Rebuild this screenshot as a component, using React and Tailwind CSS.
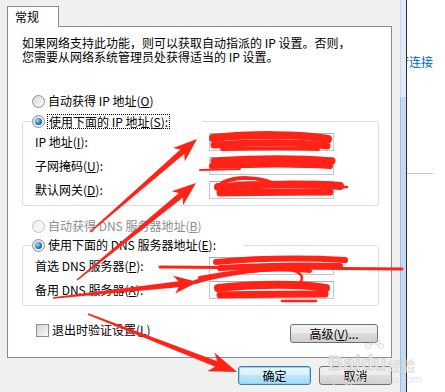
const Radio = ({ checked, disabled }) => (
  <span
    className={
      disabled
        ? "flex h-[13px] w-[13px] shrink-0 items-center justify-center rounded-full border border-[#c4c4c4] bg-linear-to-br from-[#ececec] to-[#fbfbfb]"
        : "flex h-[13px] w-[13px] shrink-0 items-center justify-center rounded-full border border-[#8e8f8f] bg-linear-to-br from-[#d8d8d8] to-[#fafafa]"
    }
  >
    {checked && (
      <span className="h-[7px] w-[7px] rounded-full bg-[radial-gradient(circle_at_35%_35%,#9be0fb,#1e7cc0_55%,#0a3a63)]" />
    )}
  </span>
);

const Field = () => (
  <div className="h-[18px] w-[125px] border border-[#c2c7cf] border-t-[#abadb3] bg-white" />
);

const Row = ({ label }) => (
  <div className="flex h-[18px] items-center">
    <span className="w-[186px] whitespace-nowrap pl-[12px]">{label}</span>
    <Field />
  </div>
);

const U = ({ children }) => <span className="underline">{children}</span>;

const btn =
  "flex h-[19px] items-center justify-center rounded-[3px] border border-[#707070] bg-[linear-gradient(#f2f2f2,#ebebeb_49%,#dddddd_50%,#cfcfcf)]";

// tapered annotation arrow: thin at the tail, wide notched head at the tip
const arrow = (x1, y1, x2, y2, len = 24, half = 9) => {
  const dx = x2 - x1;
  const dy = y2 - y1;
  const l = Math.hypot(dx, dy);
  const ux = dx / l;
  const uy = dy / l;
  const px = -uy;
  const py = ux;
  const bx = x2 - ux * len;
  const by = y2 - uy * len;
  const nx = x2 - ux * len * 0.72;
  const ny = y2 - uy * len * 0.72;
  const shaft = [
    [x1 + px * 0.8, y1 + py * 0.8],
    [nx + px * 3, ny + py * 3],
    [nx - px * 3, ny - py * 3],
    [x1 - px * 0.8, y1 - py * 0.8],
  ];
  const head = [
    [x2, y2],
    [bx + px * half, by + py * half],
    [nx, ny],
    [bx - px * half, by - py * half],
  ];
  const s = (pts) => pts.map((p) => p.join(",")).join(" ");
  return { shaft: s(shaft), head: s(head) };
};

const arrows = [
  arrow(90, 232, 197, 139),
  arrow(77, 280, 196, 183),
  arrow(53, 298, 198, 282),
  arrow(88, 314, 237, 372, 28, 10),
];

const scribbles = [
  ["M213 138 C 250 134, 300 134, 328 139", 8],
  ["M214 145 C 260 142, 300 142, 327 146", 7],
  ["M222 149 C 260 148, 300 148, 318 149", 4],
  ["M214 161 C 260 158, 300 158, 332 161", 7],
  ["M212 166 C 260 164, 300 164, 330 166", 6],
  ["M200 170 L 240 169", 2],
  ["M222 183 C 235 176, 260 177, 272 183", 4],
  ["M218 187 C 260 184, 310 184, 340 186", 8],
  ["M220 193 C 260 192, 300 192, 330 192", 7],
  ["M330 187 L 347 187", 2.5],
  ["M216 262 C 260 258, 310 258, 345 260", 6],
  ["M220 268 C 270 265, 310 265, 340 266", 6],
  ["M160 267 L 402 269", 3],
  ["M195 282 C 230 272, 270 268, 305 268", 4],
  ["M200 278 C 240 270, 280 268, 310 271", 4],
  ["M218 288 C 260 284, 300 284, 326 288", 8],
  ["M220 295 C 260 294, 300 294, 325 294", 7],
  ["M300 283 C 305 276, 300 272, 290 270", 2.5],
  ["M282 301 L 316 301", 2.5],
];

export default function App() {
  return (
    <div className="relative flex h-[392px] w-[445px] overflow-hidden bg-[#f0f0f0] font-['Noto_Sans_CJK_SC',sans-serif] text-[12px] leading-[14px] text-black">
      <div className="flex w-[400px] shrink-0 flex-col">
        <div className="relative z-10 -mb-px ml-[7px] mt-[6px] h-[21px] w-[52px] border border-b-0 border-[#898c95] bg-white pl-[7px] pt-[3px]">
          常规
        </div>
        <div className="ml-[7px] flex h-[332px] w-[385px] flex-col border border-[#898c95] bg-white">
          <div className="ml-[14px] mt-[9px] whitespace-nowrap">
            <div>如果网络支持此功能，则可以获取自动指派的 IP 设置。否则，</div>
            <div>您需要从网络系统管理员处获得适当的 IP 设置。</div>
          </div>

          <div className="ml-[24px] mt-[29px] flex h-[16px] items-center gap-[3px]">
            <Radio />
            <span>
              自动获得 IP 地址(<U>O</U>)
            </span>
          </div>

          <fieldset className="ml-[14px] mt-[4px] w-[357px] rounded-[3px] border border-[#d5dfe5] pb-[6px]">
            <legend className="ml-[9px] flex h-[16px] w-[170px] items-center gap-[2px] bg-white">
              <Radio checked />
              <span className="border border-dotted border-black px-px leading-[13px]">
                使用下面的 IP 地址(<U>S</U>):
              </span>
            </legend>
            <div className="mt-[4px] flex flex-col gap-[6px]">
              <Row label={<>IP 地址(<U>I</U>):</>} />
              <Row label={<>子网掩码(<U>U</U>):</>} />
              <Row label={<>默认网关(<U>D</U>):</>} />
            </div>
          </fieldset>

          <div className="ml-[24px] mt-[12px] flex h-[16px] items-center gap-[3px] text-[#8d8d8d]">
            <Radio disabled />
            <span>
              自动获得 DNS 服务器地址(<U>B</U>)
            </span>
          </div>

          <fieldset className="ml-[14px] mt-[3px] w-[357px] rounded-[3px] border border-[#d5dfe5] pb-[6px]">
            <legend className="ml-[9px] flex h-[16px] w-[211px] items-center gap-[3px] bg-white">
              <Radio checked />
              <span>
                使用下面的 DNS 服务器地址(<U>E</U>):
              </span>
            </legend>
            <div className="mt-[4px] flex flex-col gap-[6px]">
              <Row label={<>首选 DNS 服务器(<U>P</U>):</>} />
              <Row label={<>备用 DNS 服务器(<U>A</U>):</>} />
            </div>
          </fieldset>

          <div className="mt-[17px] flex items-start justify-between pl-[28px] pr-[13px]">
            <div className="flex items-center gap-[3px]">
              <span className="h-[13px] w-[13px] border border-[#8e8f8f] bg-linear-to-br from-[#d6d6d6] to-[#f8f8f8]" />
              <span>
                退出时验证设置(<U>L</U>)
              </span>
            </div>
            <button className={`${btn} mt-px w-[88px]`}>
              高级(<U>V</U>)...
            </button>
          </div>
        </div>

        <div className="mt-[8px] flex justify-end gap-[8px] pr-[8px]">
          <button className="flex h-[19px] w-[73px] items-center justify-center rounded-[3px] border border-[#3c7fb1] bg-[linear-gradient(#eaf6fd,#d9f0fc_49%,#bee6fd_50%,#a7d9f5)] shadow-[inset_0_0_0_1px_#8ed4f7]">
            确定
          </button>
          <button className={`${btn} w-[73px]`}>取消</button>
        </div>
      </div>

      <div className="flex w-[6px] shrink-0 flex-col">
        <div className="h-[97px] border-l border-[#c9daee] bg-[#e3ecf6]" />
        <div className="flex-1 border-l border-[#9dbfe4] bg-[#c3d9f1]" />
      </div>
      <div className="w-px shrink-0 bg-[#2a2a2a]" />
      <div className="flex flex-1 flex-col overflow-hidden bg-white">
        <div className="ml-[-10px] mt-[55px] whitespace-nowrap text-[#0066cc]">行连接</div>
        <div className="mt-[104px] h-px w-[26px] bg-[#c4c4c4]" />
      </div>

      <div className="pointer-events-none absolute left-[328px] top-[338px] flex items-end text-[#ececec] opacity-80">
        <span className="font-['Liberation_Sans',sans-serif] text-[21px] font-bold leading-[22px] [-webkit-text-stroke:1px_#cfcfcf]">
          Bai
        </span>
        <span className="flex flex-col items-center">
          <svg width="22" height="14" viewBox="0 0 22 14" fill="none" stroke="#d2d2d2">
            <circle cx="5" cy="8" r="2.5" />
            <circle cx="9" cy="4" r="2.5" />
            <circle cx="14" cy="4" r="2.5" />
            <circle cx="18" cy="8" r="2.5" />
          </svg>
          <span className="font-['Liberation_Sans',sans-serif] text-[21px] font-bold leading-[22px] [-webkit-text-stroke:1px_#cfcfcf]">
            du
          </span>
        </span>
        <span className="ml-px text-[14px] font-bold leading-[18px] text-[#dadada]">经验</span>
      </div>
      <div className="pointer-events-none absolute left-[333px] top-[373px] font-['Liberation_Sans',sans-serif] text-[11px] leading-[13px] text-[#dedede] opacity-80">
        jingyan.baidu.com
      </div>

      <svg
        className="pointer-events-none absolute left-0 top-0"
        width="445"
        height="392"
        viewBox="0 0 445 392"
      >
        <g fill="#ff2317">
          {arrows.map((a, i) => (
            <g key={i}>
              <polygon points={a.shaft} />
              <polygon points={a.head} />
            </g>
          ))}
        </g>
        <g fill="none" stroke="#ff2317" strokeLinecap="round">
          {scribbles.map(([d, w], i) => (
            <path key={i} d={d} strokeWidth={w} />
          ))}
        </g>
      </svg>
    </div>
  );
}
